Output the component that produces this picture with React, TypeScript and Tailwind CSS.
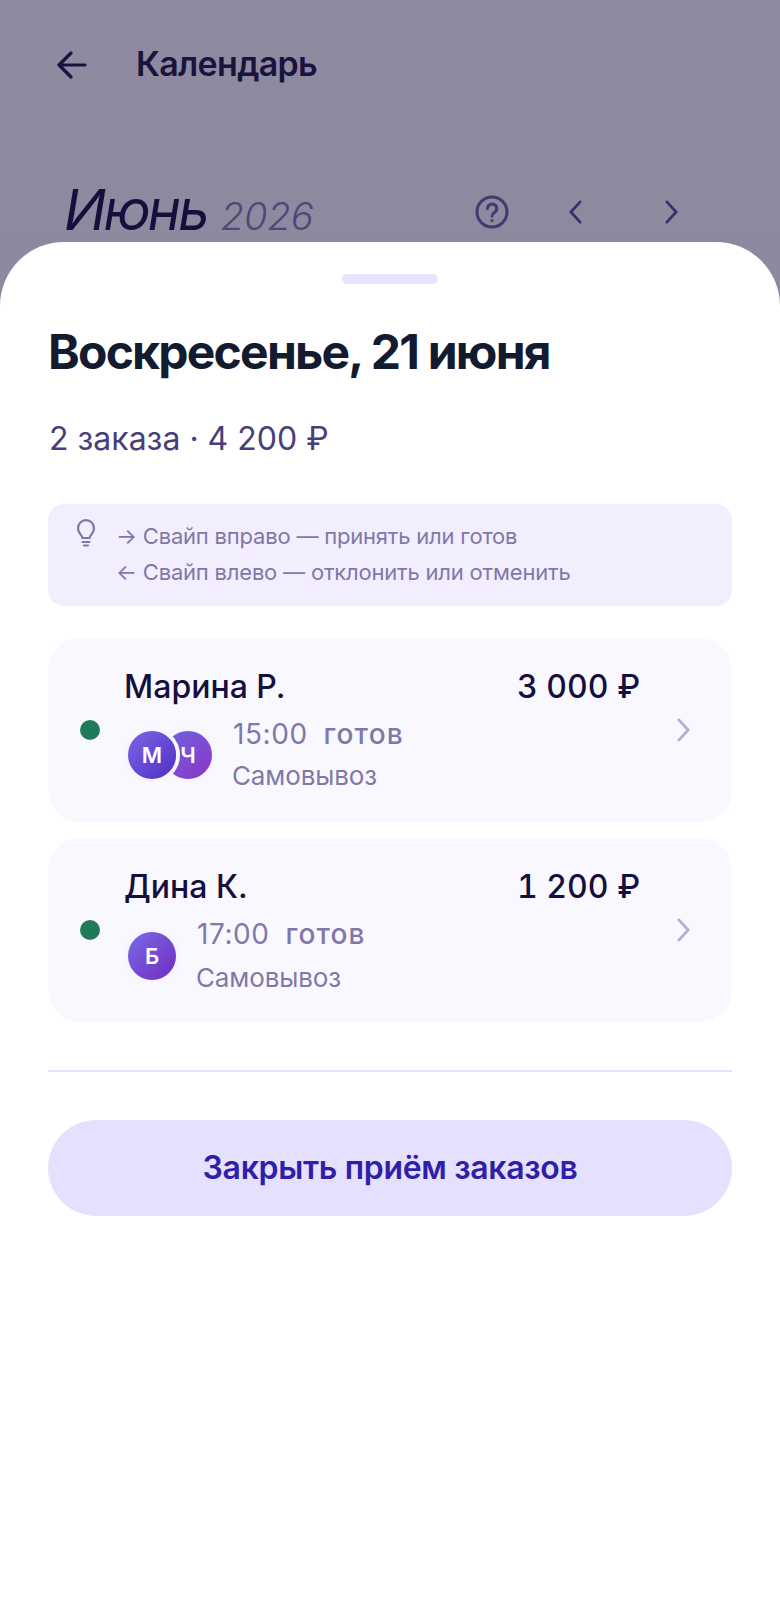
import React from 'react';

interface Order {
    name: string;
    amount: string;
    time: string;
    avatars: { letter: string; bg: string }[];
}

const orders: Order[] = [
    {
        name: 'Марина Р.',
        amount: '3 000 ₽',
        time: '15:00',
        avatars: [
            { letter: 'М', bg: 'bg-gradient-to-br from-[#7f63e6] to-[#4f2fc4]' },
            { letter: 'Ч', bg: 'bg-gradient-to-br from-[#6a63e0] to-[#8a32c4]' }
        ]
    },
    {
        name: 'Дина К.',
        amount: '1 200 ₽',
        time: '17:00',
        avatars: [{ letter: 'Б', bg: 'bg-gradient-to-br from-[#7a68e8] to-[#7028c0]' }]
    }
];

const Chevron = ({ dir, className }: { dir: 'left' | 'right'; className: string }) => (
    <svg viewBox="0 0 16 26" fill="none" stroke="currentColor" strokeWidth="3" strokeLinecap="round" strokeLinejoin="round" className={className}>
        <path d={dir === 'left' ? 'M13 2 3 13l10 11' : 'M3 2l10 11L3 24'} />
    </svg>
);

const OrderCard = ({ order }: { order: Order }) => (
    <div className="flex h-[184px] items-center rounded-[32px] bg-[#f9f8ff] pl-[32px]">
        <div className="h-[20px] w-[20px] shrink-0 rounded-full bg-[#1f7a58]" />
        <div className="ml-[24px] flex h-full w-[516px] flex-col pt-[29px]">
            <div className="flex items-center justify-between">
                <span className="text-[32px] font-medium leading-[40px] text-[#150f3d]">{order.name}</span>
                <span className="text-[32px] font-medium leading-[40px] tabular-nums text-[#150f3d]">{order.amount}</span>
            </div>
            <div className="mt-[9px] flex items-center pl-[4px]">
                <div className="flex">
                    {order.avatars.map((a, idx) => (
                        <div
                            key={a.letter}
                            className={`flex h-[48px] w-[48px] items-center justify-center rounded-full text-[22px] font-semibold text-white shadow-[0_0_0_4px_#f7f5ff] ${a.bg} ${idx > 0 ? '-ml-[12px]' : 'relative z-10'}`}
                        >
                            {a.letter}
                        </div>
                    ))}
                </div>
                <div className="ml-[21px] text-[#7f78a8]">
                    <div className="text-[28px] leading-[36px] tracking-[0.02em]">
                        {order.time}
                        <span className="ml-[16px] font-medium tracking-[0.04em]">готов</span>
                    </div>
                    <div className={`-ml-[1px] text-[26px] leading-[36px] tracking-[-0.005em] ${order.avatars.length > 1 ? 'mt-[6px]' : 'mt-[8px]'}`}>Самовывоз</div>
                </div>
            </div>
        </div>
        <Chevron dir="right" className="ml-[36px] h-[24px] w-[15px] shrink-0 text-[#b5afd3]" />
    </div>
);

export default function App() {
    return (
        <div className="flex h-[1612px] w-full flex-col overflow-hidden bg-gradient-to-b from-[#8e8aa0] to-[#87839a] font-['Inter',sans-serif]">
            <div className="flex h-[130px] items-center pl-[57px]">
                <svg viewBox="0 0 30 28" fill="none" stroke="#1a1340" strokeWidth="3.2" strokeLinecap="round" strokeLinejoin="round" className="h-[28px] w-[30px]">
                    <path d="M28 14H2M14 2 2 14l12 12" />
                </svg>
                <span className="mb-[3px] ml-[49px] text-[34px] font-semibold tracking-[-0.02em] text-[#1a1340]">Календарь</span>
            </div>
            <div className="flex h-[112px] items-start pl-[64px] pt-[50px]">
                <span className="text-[56px] font-normal italic leading-[60px] tracking-[-0.05em] text-[#150f3d]">Июнь</span>
                <span className="ml-[14px] mt-[12px] text-[38px] font-light italic leading-[48px] text-[#4e4778]">2026</span>
                <svg viewBox="0 0 34 34" fill="none" stroke="#443a72" strokeWidth="3" strokeLinecap="round" className="ml-[161px] mt-[15px] h-[34px] w-[34px]">
                    <circle cx="17" cy="17" r="15" />
                    <path d="M12.5 13.5a4.6 4.6 0 1 1 7 4c-1.600 1-2.500 1.800-2.500 3.500" />
                    <path d="M17 25.500v.1" />
                </svg>
                <Chevron dir="left" className="ml-[59px] mt-[20px] h-[24px] w-[15px] text-[#3b3169]" />
                <Chevron dir="right" className="ml-[81px] mt-[20px] h-[24px] w-[15px] text-[#3b3169]" />
            </div>
            <div className="flex-1 rounded-t-[64px] bg-white px-[48px]">
                <div className="mx-auto mt-[32px] h-[10px] w-[96px] rounded-[5px] bg-[#e8e4fd]" />
                <h1 className="mt-[38px] text-[48px] font-bold leading-[60px] tracking-[-0.037em] text-[#131b30]">Воскресенье, 21 июня</h1>
                <p className="ml-[1px] mt-[37px] text-[32px] leading-[40px] text-[#483e7a]">2 заказа · 4 200 ₽</p>
                <div className="mt-[45px] flex h-[102px] rounded-[16px] bg-[#f2eefe] pl-[28px] pt-[14px]">
                    <svg viewBox="0 0 20 28" fill="none" stroke="#7f78a8" strokeWidth="2.200" strokeLinecap="round" className="mt-[1px] h-[28px] w-[20px]">
                        <path d="M6.500 19c0-2.500-4.500-4.500-4.500-9.800a8 8 0 0 1 16 0c0 5.300-4.500 7.300-4.500 9.800z" />
                        <path d="M6.500 23h7M8 26.500h4" />
                    </svg>
                    <div className="ml-[20px] text-[22px] leading-[36px] tracking-[-0.009em] text-[#7f78a8]">
                        <div>→ Свайп вправо — принять или готов</div>
                        <div>← Свайп влево — отклонить или отменить</div>
                    </div>
                </div>
                <div className="mt-[32px] flex flex-col gap-[16px]">
                    {orders.map(order => (
                        <OrderCard key={order.name} order={order} />
                    ))}
                </div>
                <div className="mt-[48px] h-[2px] bg-[#e6e1fc]" />
                <button className="mt-[48px] flex h-[96px] w-full items-center justify-center rounded-full bg-[#e5e0fd] text-[32px] font-semibold tracking-[-0.01em] text-[#2f1fa8]">
                    Закрыть приём заказов
                </button>
            </div>
        </div>
    );
}
